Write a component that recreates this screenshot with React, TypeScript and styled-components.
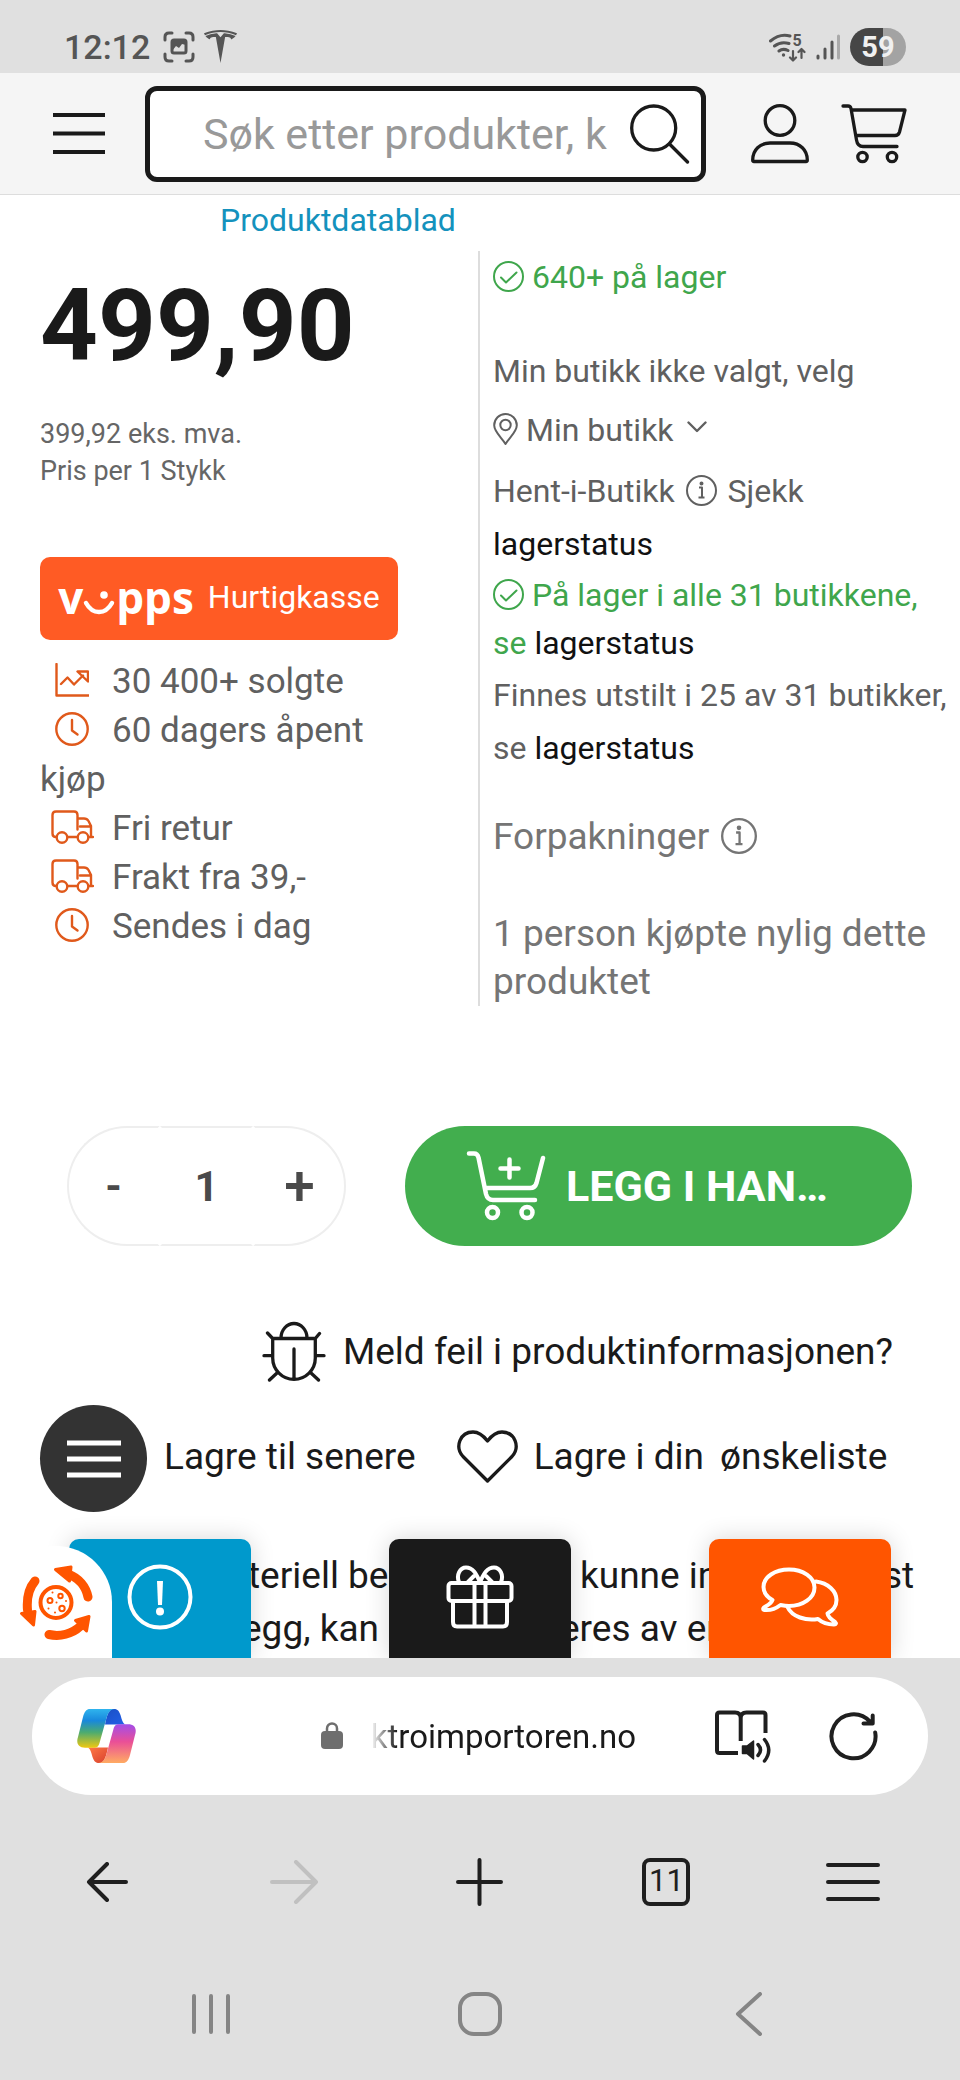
import React from "react";
import styled, { createGlobalStyle } from "styled-components";
import { SiTesla } from "react-icons/si";

const GlobalStyle = createGlobalStyle`
  *, *::before, *::after { box-sizing: border-box; }
  body {
    margin: 0;
    background: #fff;
    font-family: Roboto, "Liberation Sans", sans-serif;
    color: #1a1a1a;
  }
  h1, h2, p, ul { margin: 0; padding: 0; font-weight: 400; }
  button, input { font: inherit; color: inherit; background: none; border: 0; padding: 0; margin: 0; }
  button { cursor: pointer; }
  a { color: inherit; text-decoration: none; }
  svg { display: block; flex: none; }
`;

const Screen = styled.div`
  display: flex;
  flex-direction: column;
  min-height: 100vh;
  overflow: hidden;
`;

/* Line-drawn icon; inline use inside text is switched on with $inline */
const Icon = styled.svg<{ $stroke?: number; $inline?: number; $gap?: number }>`
  fill: none;
  stroke: currentColor;
  stroke-width: ${(p) => p.$stroke ?? 3.3};
  stroke-linecap: round;
  stroke-linejoin: round;
  ${(p) =>
    p.$inline !== undefined &&
    `display: inline-block; vertical-align: -${p.$inline}px; margin: 0 ${p.$gap ?? 0}px;`}
`;

/* ---------- status bar ---------- */

const StatusBar = styled.div`
  display: flex;
  align-items: center;
  height: 73px;
  padding: 0 54px 0 64px;
  background: #e0e0e0;
  color: #555;
`;

const Clock = styled.time`
  font-size: 34px;
  font-weight: 500;
  line-height: 40px;
  margin: 0 13px 0 0;
  padding-top: 20px;
`;

const StatusIcons = styled.div<{ $end?: boolean }>`
  display: flex;
  align-items: center;
  gap: 9px;
  padding-top: 20px;
  margin-left: ${(p) => (p.$end ? "auto" : "0")};
`;

const Battery = styled.span`
  width: 56px;
  height: 38px;
  border-radius: 19px;
  background: linear-gradient(to right, #464646 59%, #a3a3a3 59%);
  color: #f0f0f0;
  font-size: 29px;
  font-weight: 700;
  line-height: 38px;
  text-align: center;
`;

/* ---------- shop header ---------- */

const Header = styled.header`
  display: flex;
  align-items: center;
  height: 122px;
  padding: 0 53px;
  background: #f5f5f5;
  border-bottom: 1px solid #ddd;
`;

const IconButton = styled.button`
  display: flex;
  align-items: center;
  justify-content: center;
`;

const SearchBox = styled.form`
  display: flex;
  align-items: center;
  flex: 1;
  min-width: 0;
  height: 96px;
  margin: 0 45px 0 40px;
  padding: 0 11px 0 53px;
  background: #fff;
  border: 5px solid #1a1a1a;
  border-radius: 12px;
`;

const SearchInput = styled.input`
  flex: 1;
  min-width: 0;
  height: 80px;
  font-size: 43px;
  outline: 0;
  &::placeholder { color: #999; opacity: 1; }
`;

const HeaderActions = styled.div`
  display: flex;
  gap: 32px;
`;

/* ---------- product ---------- */

const Main = styled.main`
  position: relative;
  flex: 1;
`;

const DatasheetLink = styled.a`
  display: block;
  height: 56px;
  padding-left: 220px;
  font-size: 32px;
  line-height: 51px;
  color: #1492bd;
`;

const Columns = styled.section`
  display: grid;
  grid-template-columns: 1fr 1fr;
`;

const PriceColumn = styled.div`
  padding: 0 80px 0 40px;
  border-right: 2px solid #ddd;
`;

const Price = styled.h1`
  font-size: 101px;
  font-weight: 700;
  line-height: 150px;
`;

const PriceNote = styled.p`
  margin: 15px 0 67px;
  font-size: 27px;
  line-height: 37px;
  color: #666;
`;

const VippsButton = styled.button`
  display: flex;
  align-items: center;
  justify-content: center;
  gap: 14px;
  width: 100%;
  height: 83px;
  padding-bottom: 3px;
  border-radius: 10px;
  background: #ff5b24;
  color: #fff;
  font-size: 32px;
`;

const VippsLogo = styled.span`
  display: flex;
  align-items: center;
  font-family: "Open Sans", Roboto, sans-serif;
  font-size: 44px;
  font-weight: 700;
  line-height: 60px;

  svg { margin-top: 12px; }
`;

const Perks = styled.ul`
  margin-top: 17px;
  list-style: none;
  font-size: 35px;
  line-height: 49px;
  color: #606060;
`;

const PerkIcon = styled.span`
  display: inline-flex;
  justify-content: center;
  width: 64px;
  height: 34px;
  margin-right: 8px;
  vertical-align: -4px;
  color: #e0591b;
`;

const StockColumn = styled.div`
  padding: 0 6px 0 13px;
  font-size: 32px;
  line-height: 53px;
  color: #606060;
`;

const StockTotal = styled.p`
  height: 54px;
  margin-bottom: 40px;
  color: #3fa64c;
`;

const StoreButton = styled.button`
  display: block;
  height: 53px;
  margin: 6px 0 8px;
`;

const StoreStock = styled.p`
  margin-bottom: 2px;
  line-height: 48px;
  color: #3fa64c;
`;

const StockLink = styled.a`
  color: #111;
`;

const LargeNote = styled.p<{ $top: number }>`
  margin-top: ${(p) => p.$top}px;
  font-size: 37px;
  line-height: 48px;
  color: #757575;
`;

/* ---------- buying ---------- */

const BuyRow = styled.section`
  display: flex;
  gap: 59px;
  margin-top: 120px;
  padding: 0 48px 0 67px;
`;

const Quantity = styled.div`
  display: grid;
  grid-template-columns: repeat(3, 93px);
  height: 120px;
  font-size: 42px;
  font-weight: 700;
  color: #4a4a4a;

  & > * {
    width: 100%;
    height: 100%;
    border: 2px solid #eee;
    text-align: center;
    border-radius: 0;
    outline: 0;
  }
  & > :first-child { border-radius: 60px 0 0 60px; border-right-color: #fff; }
  & > :nth-child(2) { border-left-color: #fff; border-right-color: #fff; }
  & > :last-child {
    border-radius: 0 60px 60px 0;
    border-left-color: #fff;
    font-size: 55px;
    font-weight: 500;
    line-height: 100px;
  }
`;

const CartButton = styled.button`
  display: flex;
  align-items: center;
  flex: 1;
  gap: 20px;
  height: 120px;
  padding-left: 61px;
  border-radius: 60px;
  background: #42ae4e;
  color: #fff;
  font-size: 43px;
  font-weight: 700;
  white-space: nowrap;
`;

const ReportLink = styled.a`
  display: flex;
  align-items: center;
  justify-content: flex-end;
  gap: 17px;
  height: 61px;
  margin-top: 75px;
  padding-right: 67px;
  font-size: 37px;
`;

const SaveRow = styled.div`
  display: flex;
  align-items: center;
  height: 107px;
  margin-top: 23px;
  padding-left: 40px;
  font-size: 37px;
`;

const RoundMenu = styled.button`
  display: flex;
  align-items: center;
  justify-content: center;
  width: 107px;
  height: 107px;
  border-radius: 50%;
  background: #333;
  color: #fff;
`;

const SaveLink = styled.a`
  display: flex;
  align-items: center;
  gap: 16px;
  margin-left: 17px;
  padding-bottom: 4px;

  & + & { margin-left: 41px; }
`;

const Disclaimer = styled.p`
  margin-top: 37px;
  padding-bottom: 2px;
  font-size: 37px;
  line-height: 53px;
`;

const DisclaimerLine = styled.span<{ $indent: number; $columns: string }>`
  display: grid;
  grid-template-columns: ${(p) => p.$columns};
  padding-left: ${(p) => p.$indent}px;
  white-space: nowrap;
`;

const FloatingTabs = styled.nav`
  position: absolute;
  left: 0;
  right: 0;
  bottom: 0;
  display: grid;
  grid-template-columns: repeat(3, 1fr);
  justify-items: center;
`;

const FloatingTab = styled.button<{ $color: string }>`
  display: flex;
  align-items: center;
  justify-content: center;
  width: 182px;
  height: 119px;
  padding-bottom: 3px;
  border-radius: 10px 10px 0 0;
  background: ${(p) => p.$color};
  color: #fff;
  box-shadow: 0 0 24px rgba(0, 0, 0, 0.16);
`;

const CookieButton = styled.button`
  position: absolute;
  left: 0;
  bottom: 0;
  display: flex;
  justify-content: center;
  width: 112px;
  height: 112px;
  padding-top: 17px;
  border-radius: 56px 56px 0 0;
  background: #fff;
`;

/* ---------- browser chrome ---------- */

const BrowserBar = styled.footer`
  position: relative;
  padding: 19px 0 21px;
  background: #e0e0e0;
  color: #1f1f1f;
`;

const AddressPill = styled.div`
  display: flex;
  align-items: center;
  height: 118px;
  margin: 0 32px;
  padding: 0 50px 0 45px;
  border-radius: 59px;
  background: #fff;
`;

const Address = styled.button`
  display: flex;
  align-items: center;
  gap: 28px;
  margin: 0 79px 0 auto;
  font-size: 33px;
`;

const Host = styled.span`
  background: linear-gradient(to right, #fff, #1a1a1a 26px);
  background-clip: text;
  color: transparent;
`;

const AddressActions = styled.div`
  display: flex;
  align-items: center;
  gap: 57px;
`;

const BarRow = styled.nav<{ $height: number; $inset: number }>`
  display: grid;
  grid-auto-flow: column;
  grid-auto-columns: 1fr;
  height: ${(p) => p.$height}px;
  padding: 0 ${(p) => p.$inset}px;

  button:disabled { color: #c0c0c0; cursor: default; }
`;

const SystemRow = styled(BarRow)`
  color: #858585;
`;

const TabCount = styled.span`
  width: 48px;
  height: 48px;
  border: 4px solid #1f1f1f;
  border-radius: 8px;
  font-size: 31px;
  line-height: 38px;
`;

/* ---------- drawings ---------- */

const CheckIcon = () => (
  <Icon width="31" height="31" viewBox="0 0 31 31" $stroke={2} $inline={4}>
    <circle cx="15.5" cy="15.5" r="14.5" />
    <path d="M8 16.5L13 21.5L23.5 11.5" />
  </Icon>
);

const InfoIcon = ({ size, drop, gap }: { size: number; drop: number; gap?: number }) => (
  <Icon width={size} height={size} viewBox="0 0 31 31" $stroke={2} $inline={drop} $gap={gap}>
    <circle cx="15.5" cy="15.5" r="14.5" />
    <path d="M13 12.5H16V22.5M12.5 22.5H18.5" strokeLinecap="butt" />
    <circle cx="15.5" cy="8.5" r="1" />
  </Icon>
);

const ChartIcon = () => (
  <Icon width="34" height="34" viewBox="0 0 34 34" $stroke={2.4}>
    <path d="M1.5 1V32.5H33.5M6 21L12.5 14.5L19 21.5L28 12.5M22.5 8.5H33V18.5Z" />
  </Icon>
);

const ClockIcon = () => (
  <Icon width="34" height="34" viewBox="0 0 34 34" $stroke={2.4}>
    <circle cx="17" cy="17" r="15.7" />
    <path d="M17 8V18.5L22.5 22.5" />
  </Icon>
);

const TruckIcon = () => (
  <Icon width="43" height="34" viewBox="0 0 43 34" $stroke={2.4}>
    <path d="M5 27Q1.5 27 1.5 23.500V5Q1.500 1.500 5 1.500H23Q26.500 1.500 26.500 5V19.500M26.500 8.500H33Q36 8.500 37.500 11L40 16V27M29 16.500H40M17 27H26M38 27H42" />
    <circle cx="11" cy="27.500" r="5.300" />
    <circle cx="32" cy="27.500" r="5.300" />
  </Icon>
);

const CopilotLogo = () => {
  const ribbon =
    "M13 0H38C33 0 31 4 29.500 9L22.500 34C21.500 37.500 20 38.700 17 38.700H8C1 38.700-1 34 1 28L6 8C7.500 2.500 9.500 0 13 0Z";
  const fold = "M35 0C31 2 29.500 8 28 15.500H48C45.500 14 45 11 43.500 6C42 1.500 40 0 37 0Z";
  return (
    <svg width="59" height="54" viewBox="0 0 59 54">
      <defs>
        <linearGradient id="cool" x1="0" y1="0" x2="0" y2="1">
          <stop offset="0" stopColor="#2fb4ee" />
          <stop offset="0.3" stopColor="#1888dc" />
          <stop offset="0.6" stopColor="#4bab71" />
          <stop offset="1" stopColor="#efc810" />
        </linearGradient>
        <linearGradient id="warm" x1="0" y1="1" x2="0" y2="0">
          <stop offset="0" stopColor="#a34de8" />
          <stop offset="0.45" stopColor="#ea4f97" />
          <stop offset="1" stopColor="#ffab62" />
        </linearGradient>
        <linearGradient id="navy" x1="0" y1="0" x2="1" y2="1">
          <stop offset="0" stopColor="#1a4fc4" />
          <stop offset="1" stopColor="#2260e8" />
        </linearGradient>
        <linearGradient id="ember" x1="0" y1="0" x2="1" y2="1">
          <stop offset="0" stopColor="#d8402f" />
          <stop offset="1" stopColor="#ff7a45" />
        </linearGradient>
      </defs>
      <path d={fold} fill="url(#navy)" />
      <path d={fold} fill="url(#ember)" transform="rotate(180 29.500 27)" />
      <path d={ribbon} fill="url(#cool)" />
      <path d={ribbon} fill="url(#warm)" transform="rotate(180 29.500 27)" />
    </svg>
  );
};

const CookieIcon = () => (
  <svg width="76" height="78" viewBox="0 0 76 78" fill="none" stroke="#ff5500" strokeLinecap="round" strokeLinejoin="round">
    <path strokeWidth="9" d="M70 34C68 24 61 15 50 11M17 18C11 25 8.500 35 9.500 47M31 71.500C42 74 54 71 62 63.500" />
    <path
      strokeWidth="3"
      fill="#ff5500"
      d="M37.500 6.500L53 4L51.500 18ZM3.500 50.500L17 48.500L15.500 62ZM57.500 57.500L71 53.500L68.500 68Z"
    />
    <circle cx="38" cy="39.500" r="15.500" strokeWidth="4" />
    <g strokeWidth="2">
      <circle cx="32" cy="37.500" r="2.500" />
      <circle cx="42.500" cy="33" r="2.200" />
      <circle cx="44" cy="45.500" r="2.700" />
    </g>
    <path strokeWidth="2" d="M34.500 29.500h.01M38.500 39.500h.01M48 38h.01M30.500 45.500h.01M37 49.500h.01" />
  </svg>
);

const perks = [
  { icon: <ChartIcon />, text: "30 400+ solgte" },
  { icon: <ClockIcon />, text: "60 dagers åpent kjøp" },
  { icon: <TruckIcon />, text: "Fri retur" },
  { icon: <TruckIcon />, text: "Frakt fra 39,-" },
  { icon: <ClockIcon />, text: "Sendes i dag" },
];

export default function App() {
  return (
    <Screen>
      <GlobalStyle />

      <StatusBar>
        <Clock>12:12</Clock>
        <StatusIcons>
          <Icon width="32" height="32" viewBox="0 0 32 32" $stroke={3}>
            <path d="M2 9V6Q2 2 6 2H9M23 2H26Q30 2 30 6V9M30 23V26Q30 30 26 30H23M9 30H6Q2 30 2 26V23" />
            <rect x="9" y="9" width="14" height="13" rx="2" />
            <path d="M9 10H23V14L19 13L16 17L13 15L9 20Z" fill="currentColor" stroke="none" />
          </Icon>
          <SiTesla size={33} />
        </StatusIcons>
        <StatusIcons $end>
          <Icon width="37" height="30" viewBox="0 0 37 30" $stroke={3}>
            <path d="M1.500 9Q11 1 21 4M5.500 14Q12 9 20 11.500M10 19Q14 16 19 18.500" />
            <circle cx="14.500" cy="23" r="1.700" fill="currentColor" stroke="none" />
            <path d="M24 19V28M21 25.500L24 28.500L27 25.500M32.500 26V17.500M29.500 20L32.500 17L35.500 20" strokeWidth="2.200" />
            <text x="23.500" y="14" fontSize="16" fontWeight="700" fill="currentColor" stroke="none">5</text>
          </Icon>
          <Icon width="26" height="28" viewBox="0 0 26 28" $stroke={3}>
            <path d="M3 23V25M10 16V25M17 9V25" />
            <path d="M23.500 3V25" stroke="#aaa" />
          </Icon>
          <Battery>59</Battery>
        </StatusIcons>
      </StatusBar>

      <Header>
        <IconButton aria-label="Meny">
          <Icon width="52" height="41" viewBox="0 0 52 41" $stroke={4}>
            <path d="M0 2H52M0 20.500H52M0 39H52" strokeLinecap="butt" />
          </Icon>
        </IconButton>
        <SearchBox role="search" onSubmit={(e) => e.preventDefault()}>
          <SearchInput type="text" aria-label="Søk" placeholder="Søk etter produkter, k" />
          <IconButton aria-label="Søk">
            <Icon width="60" height="61" viewBox="0 0 60 61">
              <circle cx="23.700" cy="25" r="22" />
              <path d="M39.500 41L57.500 59" />
            </Icon>
          </IconButton>
        </SearchBox>
        <HeaderActions>
          <IconButton aria-label="Min side">
            <Icon width="58" height="61" viewBox="0 0 58 61">
              <circle cx="29" cy="17.500" r="14.800" />
              <path d="M3 58.500H55Q56.300 58.500 56.300 57C56.300 47 49 40 39 40H19C9 40 1.700 47 1.700 57Q1.700 58.500 3 58.500Z" />
            </Icon>
          </IconButton>
          <IconButton aria-label="Handlekurv">
            <Icon width="66" height="61" viewBox="0 0 66 61">
              <path d="M2 3H7Q9.500 3 10 5.500L15.500 37Q16.500 43.500 22 43.500H56M10.500 7H64L58.500 29Q57.500 32.500 54 32.500H15" />
              <circle cx="21.500" cy="54" r="4.700" />
              <circle cx="51" cy="54" r="4.700" />
            </Icon>
          </IconButton>
        </HeaderActions>
      </Header>

      <Main>
        <DatasheetLink href="#datablad">Produktdatablad</DatasheetLink>

        <Columns>
          <PriceColumn>
            <Price>499,90</Price>
            <PriceNote>
              399,92 eks. mva.
              <br />
              Pris per 1 Stykk
            </PriceNote>
            <VippsButton>
              <VippsLogo>
                v
                <Icon width="33" height="30" viewBox="0 0 33 30" $stroke={4.4}>
                  <path d="M3 15Q8 24 16 24T29 15" />
                  <circle cx="21" cy="7" r="3.800" fill="currentColor" stroke="none" />
                </Icon>
                pps
              </VippsLogo>
              Hurtigkasse
            </VippsButton>
            <Perks>
              {perks.map((perk) => (
                <li key={perk.text}>
                  <PerkIcon>{perk.icon}</PerkIcon>
                  {perk.text}
                </li>
              ))}
            </Perks>
          </PriceColumn>

          <StockColumn>
            <StockTotal>
              <CheckIcon /> 640+ på lager
            </StockTotal>
            <p>Min butikk ikke valgt, velg</p>
            <StoreButton>
              <Icon width="25" height="32" viewBox="0 0 25 32" $stroke={2} $inline={4}>
                <path d="M12.500 31C9 25 1.200 19 1.200 12.300A11.300 11.300 0 0 1 23.800 12.300C23.800 19 16 25 12.500 31Z" />
                <circle cx="12.500" cy="12" r="5.200" />
              </Icon>{" "}
              Min butikk{" "}
              <Icon width="20" height="28" viewBox="0 0 20 28" $inline={0} $gap={5} $stroke={2.4}>
                <path d="M1.500 9.500L10 18L18.500 9.500" />
              </Icon>
            </StoreButton>
            <p>
              Hent-i-Butikk <InfoIcon size={31} drop={4} gap={3} /> Sjekk{" "}
              <StockLink href="#lager">lagerstatus</StockLink>
            </p>
            <StoreStock>
              <CheckIcon /> På lager i alle 31 butikkene,
              <br />
              <span>se </span>
              <StockLink href="#butikker">lagerstatus</StockLink>
            </StoreStock>
            <p>
              Finnes utstilt i 25 av 31 butikker,
              <br />
              <span>se </span>
              <StockLink href="#utstilt">lagerstatus</StockLink>
            </p>
            <LargeNote $top={38}>
              Forpakninger <InfoIcon size={36} drop={5} gap={3} />
            </LargeNote>
            <LargeNote $top={49}>1 person kjøpte nylig dette produktet</LargeNote>
          </StockColumn>
        </Columns>

        <BuyRow>
          <Quantity>
            <button aria-label="Færre">-</button>
            <input type="text" inputMode="numeric" aria-label="Antall" defaultValue="1" />
            <button aria-label="Flere">+</button>
          </Quantity>
          <CartButton>
            <Icon width="80" height="72" viewBox="0 0 80 72" $stroke={4.5}>
              <path d="M3 3.500H8Q11.500 3.500 12.500 7.500L20 44Q21.500 50 27 50H69M19 38H64Q69 38 70.500 33L77 8M43.500 9.500V27.500M34.500 18.500H52.500" />
              <circle cx="26.500" cy="62.500" r="5.500" />
              <circle cx="61" cy="62.500" r="5.500" />
            </Icon>
            LEGG I HAN…
          </CartButton>
        </BuyRow>

        <ReportLink href="#meld-feil">
          <Icon width="64" height="61" viewBox="0 0 64 61">
            <path d="M19 17A13 14.500 0 0 1 45 17M10.700 17.500H53.300V37A21.300 21.300 0 0 1 10.700 37ZM32 28V58M5.500 12L10.700 17.500M57.500 12.500L53.300 17.500M2 34.700H10.700M53.300 34.700H62M7.500 59L15 52M56.500 59L49 52" />
          </Icon>
          Meld feil i produktinformasjonen?
        </ReportLink>

        <SaveRow>
          <RoundMenu aria-label="Hurtigmeny">
            <Icon width="54" height="38" viewBox="0 0 54 38" $stroke={5}>
              <path d="M0 3H54M0 19H54M0 35H54" strokeLinecap="butt" />
            </Icon>
          </RoundMenu>
          <SaveLink href="#senere">Lagre til senere</SaveLink>
          <SaveLink href="#liste">
            <Icon width="61" height="53" viewBox="0 0 61 53">
              <path d="M30.500 51L6 26.500C-2.500 17 3 2 16 2C23 2 27 6.500 30.500 11C34 6.500 38 2 45 2C58 2 63.500 17 55 26.500Z" />
            </Icon>
            <span>Lagre i din</span>
            <span>ønskeliste</span>
          </SaveLink>
        </SaveRow>

        <Disclaimer>
          <DisclaimerLine $indent={248} $columns="332px 303px auto">
            <span>teriell ber</span>
            <span>kunne in</span>
            <span>st</span>
          </DisclaimerLine>
          <DisclaimerLine $indent={242} $columns="318px auto">
            <span>egg, kan l</span>
            <span>eres av er</span>
          </DisclaimerLine>
        </Disclaimer>

        <FloatingTabs>
          <FloatingTab $color="#0099cc" aria-label="Varsler">
            <Icon width="66" height="66" viewBox="0 0 66 66" $stroke={4}>
              <circle cx="33" cy="33" r="30.500" />
              <path d="M30 17H36L35 41H31Z" fill="currentColor" stroke="none" />
              <circle cx="33" cy="47.500" r="4" fill="currentColor" stroke="none" />
            </Icon>
          </FloatingTab>
          <FloatingTab $color="#1a1a1a" aria-label="Gaver">
            <Icon width="68" height="64" viewBox="0 0 68 64" $stroke={4}>
              <rect x="2.500" y="18" width="63" height="18" rx="3" />
              <path d="M7 36V57Q7 61.500 11 61.500H57Q61 61.500 61 57V36M28.500 18V61M39.500 18V61" />
              <path d="M13 17C10 10 14 2.500 20 2.500C28 2.500 31 11 34 17C37 11 40 2.500 48 2.500C54 2.500 58 10 55 17M22 17L28 11M46 17L40 11" />
            </Icon>
          </FloatingTab>
          <FloatingTab $color="#ff5500" aria-label="Chat">
            <Icon width="78" height="62" viewBox="0 0 78 62" $stroke={4}>
              <path d="M11.500 34C4 30 2.500 25 2.500 21C2.500 11 14 3.500 28 3.500C42 3.500 53.500 11 53.500 21.500C53.500 32 42 40 28 40C25 40 22 39.500 19.500 39C15 42.500 9 44.500 3.500 44C1.500 43.500 2 42.500 3 41.500C7 39 10.500 37.500 11.500 34Z" />
              <path d="M55 15.500C67 17 75.500 25 75.500 34C75.500 40 72 44.500 66.500 47.500C67 51 69.500 53 74 56C75.500 57.500 75 58.500 73 58.500C67 58.500 61 56.500 57 53C45 55 31 51 26.500 41" />
            </Icon>
          </FloatingTab>
        </FloatingTabs>
        <CookieButton aria-label="Informasjonskapsler">
          <CookieIcon />
        </CookieButton>
      </Main>

      <BrowserBar>
        <AddressPill>
          <IconButton aria-label="Copilot">
            <CopilotLogo />
          </IconButton>
          <Address>
            <svg width="22" height="28" viewBox="0 0 22 28">
              <rect x="0" y="9" width="22" height="18" rx="4" fill="#6e6e6e" />
              <path d="M6 10V6.500a5 5 0 0 1 10 0V10" fill="none" stroke="#6e6e6e" strokeWidth="2.500" />
            </svg>
            <Host>ktroimportoren.no</Host>
          </Address>
          <AddressActions>
            <IconButton aria-label="Les opp siden">
              <Icon width="57" height="53" viewBox="0 0 57 53" $stroke={4}>
                <path d="M23 43H4.500Q2 43 2 40.500V5Q2 2.500 4.500 2.500H20Q25.700 2.500 25.700 8V31M25.700 8Q25.700 2.500 31.500 2.500H48Q50.500 2.500 50.500 5V23" strokeLinecap="butt" />
                <path d="M27.500 36H32L38.500 31V49L32 43.500H27.500Z" fill="currentColor" stroke="currentColor" strokeWidth="1.500" />
                <path d="M43 34.500Q48 40 43 45.500M49.500 29.500Q58 40 49.500 51" strokeWidth="3.500" />
              </Icon>
            </IconButton>
            <IconButton aria-label="Last på nytt">
              <Icon width="49" height="49" viewBox="0 0 49 49" $stroke={4}>
                <path d="M46.200 20.500A22 22 0 1 1 41 9.700M43.700 3.500V11.500H34.500" />
              </Icon>
            </IconButton>
          </AddressActions>
        </AddressPill>

        <BarRow $height={174} $inset={14}>
          <IconButton aria-label="Tilbake">
            <Icon width="42" height="40" viewBox="0 0 42 40" $stroke={4}>
              <path d="M21 2L3 20L21 38M3 20H40" />
            </Icon>
          </IconButton>
          <IconButton aria-label="Fremover" disabled>
            <Icon width="48" height="44" viewBox="0 0 48 44" $stroke={4}>
              <path d="M26 2L46 22L26 42M46 22H2" />
            </Icon>
          </IconButton>
          <IconButton aria-label="Ny fane">
            <Icon width="47" height="48" viewBox="0 0 47 48" $stroke={4}>
              <path d="M23.500 2V46M2 24H45" />
            </Icon>
          </IconButton>
          <IconButton aria-label="Faner">
            <TabCount>11</TabCount>
          </IconButton>
          <IconButton aria-label="Nettlesermeny">
            <Icon width="54" height="40" viewBox="0 0 54 40" $stroke={4}>
              <path d="M2 3H52M2 20H52M2 37H52" />
            </Icon>
          </IconButton>
        </BarRow>

        <SystemRow $height={90} $inset={77}>
          <IconButton aria-label="Nylige apper">
            <Icon width="40" height="42" viewBox="0 0 40 42" $stroke={4}>
              <path d="M3 3V39M20 3V39M37 3V39" />
            </Icon>
          </IconButton>
          <IconButton aria-label="Hjem">
            <Icon width="44" height="44" viewBox="0 0 44 44" $stroke={4}>
              <rect x="2" y="2" width="40" height="40" rx="14" />
            </Icon>
          </IconButton>
          <IconButton aria-label="Gå tilbake">
            <Icon width="28" height="44" viewBox="0 0 28 44" $stroke={4}>
              <path d="M25 2L3 22L25 42" />
            </Icon>
          </IconButton>
        </SystemRow>
      </BrowserBar>
    </Screen>
  );
}
